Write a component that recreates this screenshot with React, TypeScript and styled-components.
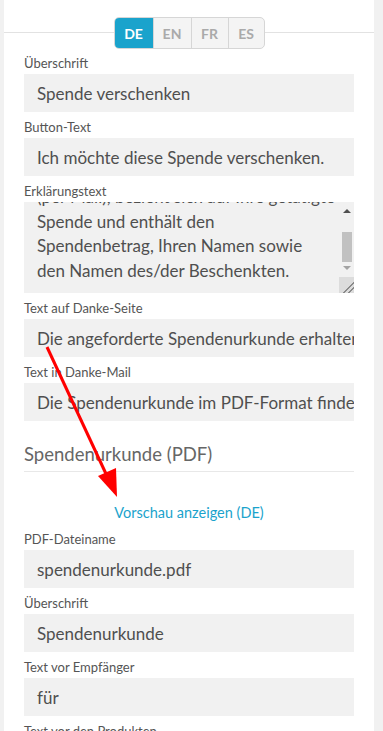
import React from "react"
import styled, { createGlobalStyle } from "styled-components"

const GlobalStyle = createGlobalStyle`
  html, body {
    margin: 0;
    padding: 0;
    background: #f1f1f1;
    font-family: Lato, "Open Sans", sans-serif;
  }
`

const Page = styled.div`
  position: relative;
  width: 383px;
  height: 731px;
  overflow: hidden;
`

const Panel = styled.div`
  margin-left: 4px;
  width: 370px;
  min-height: 731px;
  background: #fff;
  padding: 17px 0 0;
  box-sizing: border-box;
`

const TabBar = styled.div`
  position: relative;
  display: flex;
  justify-content: center;

  &::before {
    content: "";
    position: absolute;
    left: 0;
    right: 0;
    top: 15px;
    border-top: 1px solid #e2e2e2;
  }
`

const Tabs = styled.div`
  position: relative;
  display: flex;
  border: 1px solid #d6d6d6;
  border-radius: 5px;
  overflow: hidden;
  background: #f4f4f4;
`

const Tab = styled.div<{ $active?: boolean; $first?: boolean; $width: number }>`
  height: 30px;
  width: ${(p) => p.$width}px;
  display: flex;
  align-items: center;
  justify-content: center;
  font-size: 14px;
  font-weight: 700;
  color: ${(p) => (p.$active ? "#fff" : "#aaa")};
  background: ${(p) => (p.$active ? "#1aa3cc" : "transparent")};
  border-left: ${(p) => (p.$first ? "none" : "1px solid #d6d6d6")};
`

const Body = styled.div`
  padding: 5px 20px 0;
`

const Field = styled.div`
  margin-bottom: 6px;
`

const Label = styled.div`
  font-size: 13px;
  line-height: 18px;
  color: #555;
  margin-bottom: 2px;
`

const Input = styled.div`
  height: 38px;
  background: #f1f1f1;
  padding: 0 13px;
  display: flex;
  align-items: center;
  font-size: 17px;
  color: #4f4f4f;
  white-space: nowrap;
  overflow: hidden;
`

const AreaBox = styled.div`
  display: flex;
  height: 91px;
  background: #f1f1f1;
`

// textarea scrolled to its end: lines sit at the bottom, the top one is clipped
const AreaText = styled.div`
  flex: 1;
  display: flex;
  flex-direction: column;
  justify-content: flex-end;
  overflow: hidden;
  padding: 0 13px 10px;
  font-size: 17px;
  line-height: 24.5px;
  color: #4f4f4f;
  white-space: pre;
`

const ScrollTrack = styled.div`
  width: 15px;
  display: flex;
  flex-direction: column;
  align-items: center;
  padding-top: 7px;
  box-sizing: border-box;
`

const ArrowUp = styled.div<{ $color: string }>`
  width: 0;
  height: 0;
  border-left: 4px solid transparent;
  border-right: 4px solid transparent;
  border-bottom: 4px solid ${(p) => p.$color};
`

const ArrowDown = styled.div<{ $color: string }>`
  width: 0;
  height: 0;
  border-left: 4px solid transparent;
  border-right: 4px solid transparent;
  border-top: 4px solid ${(p) => p.$color};
`

const Thumb = styled.div`
  width: 10px;
  height: 30px;
  margin: 19px 0 4px;
  background: #c1c1c1;
`

const Resizer = styled.div`
  margin-top: auto;
  width: 15px;
  height: 16px;
  background:
    linear-gradient(135deg, transparent 62%, #8a8a8a 62%, #8a8a8a 68%, transparent 68%, transparent 80%, #8a8a8a 80%, #8a8a8a 86%, transparent 86%),
    #dcdcdc;
`

const SectionTitle = styled.h2`
  margin: 19px 0 0;
  padding-bottom: 3px;
  border-bottom: 1px solid #e8e8e8;
  font-size: 18.5px;
  line-height: 28px;
  font-weight: 400;
  color: #666;
`

const PreviewLink = styled.a`
  display: block;
  margin: 31px 0 7px;
  text-align: center;
  font-size: 14.5px;
  line-height: 20px;
  color: #1aa3cc;
  text-decoration: none;
`

const Arrow = styled.svg`
  position: absolute;
  left: 0;
  top: 0;
  pointer-events: none;
`

const explanation = [
  "Die Spendenurkunde wird als PDF erstellt und",
  "(per Mail), bezieht sich auf Ihre getätigte",
  "Spende und enthält den",
  "Spendenbetrag, Ihren Namen sowie",
  "den Namen des/der Beschenkten.",
].join("\n")

const langs = [
  { code: "DE", width: 38 },
  { code: "EN", width: 37 },
  { code: "FR", width: 36 },
  { code: "ES", width: 35 },
]

const App: React.FC = () => (
  <Page>
    <GlobalStyle />
    <Panel>
      <TabBar>
        <Tabs>
          {langs.map((l, i) => (
            <Tab key={l.code} $active={i === 0} $first={i === 0} $width={l.width}>
              {l.code}
            </Tab>
          ))}
        </Tabs>
      </TabBar>
      <Body>
        <Field>
          <Label>Überschrift</Label>
          <Input>Spende verschenken</Input>
        </Field>
        <Field>
          <Label>Button-Text</Label>
          <Input>Ich möchte diese Spende verschenken.</Input>
        </Field>
        <Field>
          <Label>Erklärungstext</Label>
          <AreaBox>
            <AreaText>{explanation}</AreaText>
            <ScrollTrack>
              <ArrowUp $color="#505050" />
              <Thumb />
              <ArrowDown $color="#a3a3a3" />
              <Resizer />
            </ScrollTrack>
          </AreaBox>
        </Field>
        <Field>
          <Label>Text auf Danke-Seite</Label>
          <Input>Die angeforderte Spendenurkunde erhalten Sie per E-Mail.</Input>
        </Field>
        <Field>
          <Label>Text in Danke-Mail</Label>
          <Input>Die Spendenurkunde im PDF-Format finden Sie im Anhang.</Input>
        </Field>

        <SectionTitle>Spendenurkunde (PDF)</SectionTitle>
        <PreviewLink href="#">Vorschau anzeigen (DE)</PreviewLink>

        <Field>
          <Label>PDF-Dateiname</Label>
          <Input>spendenurkunde.pdf</Input>
        </Field>
        <Field>
          <Label>Überschrift</Label>
          <Input>Spendenurkunde</Input>
        </Field>
        <Field>
          <Label>Text vor Empfänger</Label>
          <Input>für</Input>
        </Field>
        <Field>
          <Label>Text vor den Produkten</Label>
          <Input>für die Spende an</Input>
        </Field>
      </Body>
    </Panel>

    <Arrow width="383" height="731" viewBox="0 0 383 731">
      <line x1="47" y1="347" x2="107" y2="476" stroke="#ff0000" strokeWidth="3" />
      <polygon points="117,497 98,476 116,468" fill="#ff0000" />
    </Arrow>
  </Page>
)

export default App
